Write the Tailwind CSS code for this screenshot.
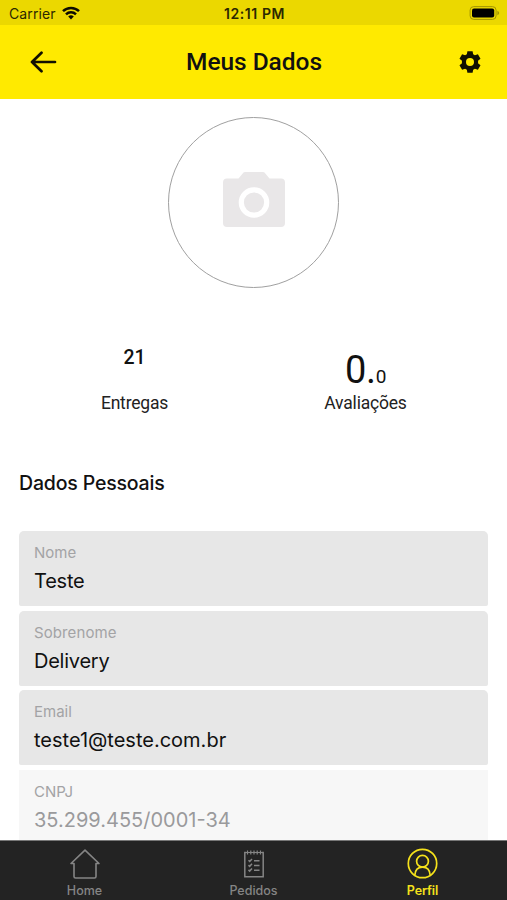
<!DOCTYPE html>
<html lang="pt-BR">
<head>
<meta charset="utf-8">
<meta name="viewport" content="width=device-width, initial-scale=1">
<title>Meus Dados</title>
<script src="https://cdn.jsdelivr.net/npm/@tailwindcss/browser@4"></script>
</head>
<body class="bg-white">
<div class="w-[507px] h-[900px] flex flex-col overflow-hidden bg-white text-[#111] font-['Inter',sans-serif]">
  <div class="h-[25px] shrink-0 bg-[#ebd800] grid grid-cols-3 items-center pl-[9px] pr-[7px] pt-[2px] text-[#2b2800]">
    <div class="flex items-center gap-[6px]">
      <span class="text-[14px] leading-[20px] tracking-[0.1px]">Carrier</span>
      <svg class="w-[18px] h-[14px] -mt-[2px]" viewBox="0 0 18 14" fill="none" stroke="#0d0c00" stroke-width="2.5"><path d="M1 5.2a11.3 11.3 0 0 1 16 0M4 8.3a7.1 7.1 0 0 1 10 0"/><path d="M9 13.4 6.2 10.6a4 4 0 0 1 5.6 0Z" fill="#0d0c00" stroke="none"/></svg>
    </div>
    <span class="text-center text-[14px] leading-[20px] font-semibold whitespace-nowrap tracking-[0.6px]">12:11 PM</span>
    <svg class="justify-self-end w-[31px] h-[14px] -mt-[1px]" viewBox="0 0 31 14"><rect x="1.1" y=".6" width="26" height="12.8" rx="3.6" fill="none" stroke="#a39500"/><rect x="3" y="2.4" width="22.2" height="9.2" rx="2" fill="#000"/><path d="M28.4 4.8q1.8.7 1.8 2.2t-1.8 2.2Z" fill="#a39500"/></svg>
  </div>
  <header class="h-[73.5px] shrink-0 bg-[#ffea00] grid grid-cols-[1fr_auto_1fr] items-center pl-[30px] pr-[24px]">
    <svg class="w-[27px] h-[22px]" viewBox="0 0 27 22" fill="none" stroke="#111000" stroke-width="2.7" stroke-linecap="round" stroke-linejoin="round"><path d="M25 11H2M11.5 1.8 2 11l9.5 9.2"/></svg>
    <h1 class="text-[24.5px] leading-[30px] font-medium font-['Roboto',sans-serif] tracking-[-0.05px] translate-x-[-2.5px]">Meus Dados</h1>
    <svg class="justify-self-end w-[26px] h-[26px]" viewBox="0 0 24 24" fill="#111000"><path fill-rule="evenodd" d="M9.6 2h4.8l.5 2.9c.6.2 1.100.5 1.600.9l2.800-1 2.400 4.200-2.300 1.900c.1.700.1 1.500 0 2.200l2.300 1.900-2.400 4.200-2.800-1c-.5.400-1 .7-1.600.9l-.5 2.900H9.600l-.5-2.900c-.6-.2-1.100-.5-1.600-.9l-2.800 1L2.300 15l2.300-1.900c-.1-.700-.1-1.500 0-2.200L2.300 9l2.400-4.200 2.800 1c.5-.400 1-.7 1.600-.9ZM12 8.300a3.700 3.700 0 1 0 0 7.400 3.700 3.700 0 0 0 0-7.400Z"/></svg>
  </header>
  <main class="flex-1 min-h-0 overflow-hidden px-[19px]">
    <div class="mt-[18.5px] ml-[149px] w-[171px] h-[171px] rounded-full border border-[#a0a0a0] flex items-center justify-center">
      <svg class="w-[62px] h-[55px] -mt-[6px]" viewBox="0 0 62 55"><path d="M4 6.500H15.500L20.500.600q.5-.6 1.500-.6H40q1 0 1.500.6L46.500 6.500H58q4 0 4 4V51q0 4-4 4H4q-4 0-4-4V10.500q0-4 4-4Z" fill="#e9e7e8"/><circle cx="31" cy="30.500" r="12.700" fill="none" stroke="#fff" stroke-width="5.200"/></svg>
    </div>
    <div class="mt-[58px] h-[67px] flex font-['Roboto',sans-serif]">
      <div class="w-[231px] flex flex-col items-center justify-between">
        <span class="text-[19.5px] leading-[24px] font-medium tracking-[-0.2px]">21</span>
        <span class="text-[17.5px] leading-[20px] tracking-[-0.2px] text-[#222]">Entregas</span>
      </div>
      <div class="w-[231px] flex flex-col items-center justify-between">
        <span class="h-[46px] whitespace-nowrap text-[38px] leading-[48px] tracking-[-0.4px]">0.<span class="text-[19px]">0</span></span>
        <span class="text-[17.5px] leading-[20px] tracking-[-0.2px] text-[#222]">Avaliações</span>
      </div>
    </div>
    <h2 class="mt-[57px] text-[19.5px] leading-[26px] font-medium font-['Inter',sans-serif] tracking-[-0.17px]">Dados Pessoais</h2>
    <div class="mt-[35px] flex flex-col gap-[4.5px]">
      <div class="h-[75px] rounded-t-[5px] rounded-b-[2px] bg-[#e7e7e7] px-[15px] pt-[12px]"><div class="text-[15px] leading-[20px] text-[#a3a3a5]">Nome</div><div class="mt-[5px] text-[20px] leading-[26px] tracking-[-0.2px]">Teste</div></div>
      <div class="h-[75px] rounded-t-[5px] rounded-b-[2px] bg-[#e7e7e7] px-[15px] pt-[12px]"><div class="text-[15px] leading-[20px] text-[#a3a3a5] tracking-[0.1px]">Sobrenome</div><div class="mt-[5px] text-[20px] leading-[26px] tracking-[-0.25px]">Delivery</div></div>
      <div class="h-[75px] rounded-t-[5px] rounded-b-[2px] bg-[#e7e7e7] px-[15px] pt-[12px]"><div class="text-[15px] leading-[20px] text-[#a3a3a5]">Email</div><div class="mt-[5px] text-[20px] leading-[26px]">teste1@teste.com.br</div></div>
      <div class="h-[75px] bg-[#f7f7f7] px-[15px] pt-[12px]"><div class="text-[15px] leading-[20px] text-[#a3a3a5]">CNPJ</div><div class="mt-[5px] text-[20px] leading-[26px] text-[#9a9a9c]">35.299.455/0001-34</div></div>
    </div>
  </main>
  <nav class="h-[60px] shrink-0 bg-[#232323] border-t border-[#777] grid grid-cols-3 text-[12.5px] leading-[16px] font-medium text-[#858585]">
    <div class="flex flex-col items-center pt-[7px]">
      <svg class="w-[32px] h-[32px]" viewBox="0 0 32 32" fill="none" stroke="currentColor" stroke-width="1.600" stroke-linejoin="round"><path d="M16 2.200 30 15.500H27V28.500q0 1.500-1.500 1.500H6.500Q5 30 5 28.500V15.500H2Z"/></svg>
      <span class="mt-[3px] tracking-[0px]">Home</span>
    </div>
    <div class="flex flex-col items-center pt-[7px]">
      <svg class="w-[32px] h-[32px]" viewBox="0 0 32 32" fill="none" stroke="currentColor" stroke-width="1.500"><path d="M8 4.500H6.800V28.700H25.200V4.500H24" /><path d="M8 4.500H24" stroke-width="1.100"/><path d="M9.500 2.500V6.500M12.800 2.500V6.500M16 2.500V6.500M19.200 2.500V6.500M22.500 2.500V6.500" stroke-width="1.200"/><path d="m10.500 12.300 1.200 1.200 2.300-2.500M10.500 17.100l1.200 1.200 2.300-2.500M10.500 21.900l1.200 1.200 2.300-2.500M16 12.800H21.500M16 17.500H21.500M16 22.300H21.500"/></svg>
      <span class="mt-[3px] tracking-[0px]">Pedidos</span>
    </div>
    <div class="flex flex-col items-center pt-[7px] text-[#f5e11b]">
      <svg class="w-[32px] h-[32px] -translate-x-[0.5px]" viewBox="0 0 32 32" fill="none" stroke="currentColor" stroke-width="1.700"><circle cx="16" cy="15.500" r="14.200"/><circle cx="16" cy="13.200" r="5.900"/><path d="M8.300 27.300q.5-8.200 7.700-8.200t7.700 8.200"/></svg>
      <span class="mt-[3px] font-semibold tracking-[-0.1px]">Perfil</span>
    </div>
  </nav>
</div>
</body>
</html>
